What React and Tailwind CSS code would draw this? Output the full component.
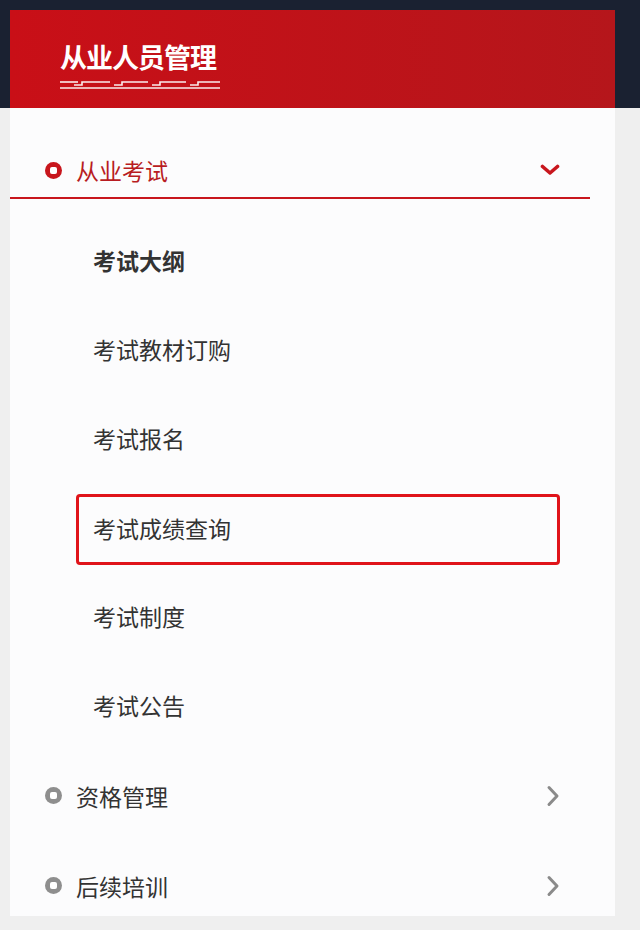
import React from "react";

const font = { fontFamily: '"Noto Sans CJK SC", "Noto Sans", sans-serif' };

function Deco() {
  const steps = [22, 62, 100, 138];
  return (
    <svg width="160" height="10" viewBox="0 0 160 10" className="block">
      <g stroke="#ffffff" strokeWidth="1.6" fill="none" opacity="0.92">
        <path d="M0 8 H160" />
        <path d="M0 2 H18" />
        {steps.map((x, i) => (
          <path key={i} d={`M${x - 8} 5 H${x} V2 H${(steps[i + 1] ?? 172) - 12}`} />
        ))}
      </g>
    </svg>
  );
}

function Dot({ red }) {
  return (
    <span
      className={
        "flex h-[17px] w-[17px] shrink-0 items-center justify-center rounded-full " +
        (red ? "bg-[#c8161d]" : "bg-[#8e8e8e]")
      }
    >
      <span className="h-[7px] w-[7px] rounded-[2px] bg-white" />
    </span>
  );
}

function ChevronDown() {
  return (
    <svg width="20" height="12" viewBox="0 0 20 12" className="block">
      <path d="M2.5 2.5 L10 9 L17.5 2.5" stroke="#c8161d" strokeWidth="3.6" fill="none" strokeLinecap="round" strokeLinejoin="round" />
    </svg>
  );
}

function ChevronRight() {
  return (
    <svg width="14" height="22" viewBox="0 0 14 22" className="block">
      <path d="M3 2.5 L11 11 L3 19.5" stroke="#8a8a8a" strokeWidth="3" fill="none" strokeLinecap="round" strokeLinejoin="round" />
    </svg>
  );
}

const items = ["考试大纲", "考试教材订购", "考试报名", "考试成绩查询", "考试制度", "考试公告"];

export default function App() {
  return (
    <div
      className="h-[930px] w-[640px] overflow-hidden bg-[linear-gradient(to_bottom,#1a2131_108px,#efefef_108px)] pl-[10px] pt-[10px]"
      style={font}
    >
      <div className="flex h-[906px] w-[605px] flex-col overflow-hidden bg-[#fcfcfd]">
        <div className="flex h-[98px] shrink-0 flex-col bg-[linear-gradient(to_right,#c90f17,#b5161b)] pl-[50px] pt-[29px]">
          <div className="text-[27px] font-bold leading-[36px] tracking-[-1px] text-white">从业人员管理</div>
          <div className="mt-[5px]">
            <Deco />
          </div>
        </div>

        <div className="mr-[25px] h-[91px] shrink-0 border-b-2 border-[#c8161d] pl-[35px] pr-[30px] pt-[47px]">
          <div className="flex h-[30px] items-center">
            <Dot red />
            <span className="ml-[14px] text-[23px] leading-[30px] text-[#b81c22]">从业考试</span>
            <span className="ml-auto">
              <ChevronDown />
            </span>
          </div>
        </div>

        <div className="flex flex-col pt-[16px]">
          {items.map((t, i) =>
            i === 3 ? (
              <div key={t} className="h-[89px] shrink-0 pt-[12px]">
                <div className="ml-[66px] flex h-[71px] w-[484px] items-center rounded-[4px] border-[3px] border-[#e0141a] pb-[4px] pl-[14px]">
                  <span className="text-[23px] leading-[30px] text-[#333]">{t}</span>
                </div>
              </div>
            ) : (
              <div key={t} className="flex h-[89px] shrink-0 items-center pl-[83px]">
                <span className={"text-[23px] leading-[30px] text-[#333] " + (i === 0 ? "font-bold" : "")}>{t}</span>
              </div>
            )
          )}
        </div>

        {["资格管理", "后续培训"].map((t) => (
          <div key={t} className="flex h-[90px] shrink-0 items-center pl-[35px] pr-[55px] pt-[3px]">
            <Dot />
            <span className="ml-[14px] text-[23px] leading-[30px] text-[#333]">{t}</span>
            <span className="ml-auto">
              <ChevronRight />
            </span>
          </div>
        ))}
      </div>
    </div>
  );
}
